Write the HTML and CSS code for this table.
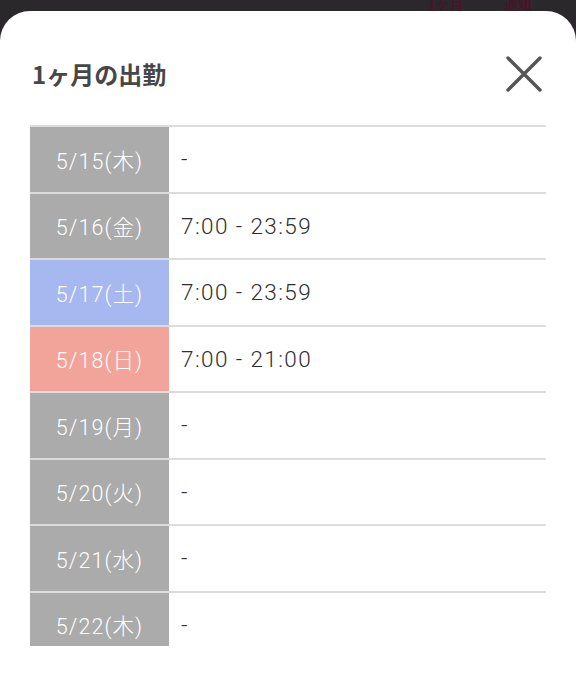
FILE: index.html
```html
<!DOCTYPE html>
<html lang="ja">
<head>
<meta charset="utf-8">
<link rel="stylesheet" href="styles.css">
</head>
<body>
<div class="topbar">
  <span class="tab">1ヶ月</span>
  <span class="tab">通知</span>
</div>
<div class="modal">
  <div class="header">
    <h1 class="title">1ヶ月の出勤</h1>
    <svg class="close" width="36" height="36" viewBox="0 0 36 36" aria-label="閉じる">
      <path d="M2 2 L34 34 M34 2 L2 34" stroke="#555" stroke-width="3.4" stroke-linecap="round" fill="none"/>
    </svg>
  </div>
  <div class="list">
    <div class="row"><div class="date gray">5/15(木)</div><div class="time">-</div></div>
    <div class="row"><div class="date gray">5/16(金)</div><div class="time">7:00 - 23:59</div></div>
    <div class="row"><div class="date blue">5/17(土)</div><div class="time">7:00 - 23:59</div></div>
    <div class="row"><div class="date red">5/18(日)</div><div class="time">7:00 - 21:00</div></div>
    <div class="row"><div class="date gray">5/19(月)</div><div class="time">-</div></div>
    <div class="row"><div class="date gray">5/20(火)</div><div class="time">-</div></div>
    <div class="row"><div class="date gray">5/21(水)</div><div class="time">-</div></div>
    <div class="row"><div class="date gray">5/22(木)</div><div class="time">-</div></div>
  </div>
</div>
</body>
</html>
```
FILE: styles.css
```css
html, body {
  margin: 0;
  padding: 0;
  height: 687px;
  overflow: hidden;
  background: #2b282c;
  font-family: "Noto Sans CJK JP", "Noto Sans", sans-serif;
}
.topbar {
  height: 11px;
  overflow: hidden;
  display: flex;
  justify-content: flex-end;
  gap: 40px;
  padding-right: 44px;
}
.tab {
  font-size: 14px;
  font-weight: 700;
  line-height: 14px;
  color: #4a1428;
  margin-top: -4px;
}
.modal {
  background: #fff;
  border-radius: 30px 30px 0 0;
  height: 676px;
  padding: 0 30px;
}
.header {
  display: flex;
  justify-content: space-between;
  align-items: center;
  padding-top: 41px;
  height: 44px;
  margin-bottom: 29px;
  padding-right: 4px;
}
.title {
  margin: 0;
  font-size: 24px;
  font-weight: 700;
  color: #474747;
  line-height: 44px;
  padding-left: 2px;
}
.close {
  display: block;
}
.list {
  height: 519px;
  overflow: hidden;
  border-top: 2px solid #dcdcdc;
}
.row {
  display: flex;
  height: 64.5px;
  border-bottom: 2px solid #dcdcdc;
}
.date {
  width: 139px;
  flex: none;
  display: flex;
  align-items: center;
  justify-content: center;
  color: #fff;
  font-family: Roboto, "Noto Sans CJK JP", sans-serif;
  font-weight: 300;
  font-size: 21.5px;
  letter-spacing: 1.1px;
}
.gray { background: #ababab; }
.blue { background: #a7b7f0; }
.red { background: #f3a49a; }
.time {
  display: flex;
  align-items: center;
  padding-left: 12px;
  font-family: Roboto, "Noto Sans CJK JP", sans-serif;
  font-weight: 300;
  font-size: 22.5px;
  letter-spacing: 1.4px;
  color: #2e2e2e;
}
```
